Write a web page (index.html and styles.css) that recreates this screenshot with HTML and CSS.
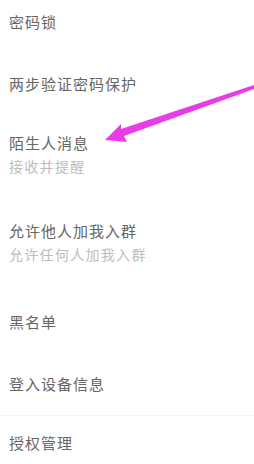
FILE: index.html
```html
<!DOCTYPE html>
<html lang="zh-CN">
<head>
    <meta charset="UTF-8">
    <meta name="viewport" content="width=device-width, initial-scale=1.0">
    <title>隐私设置</title>
    <link rel="stylesheet" href="styles.css">
</head>
<body>
    <div class="settings">
        <div class="row">
            <div class="title">密码锁</div>
        </div>
        <div class="row">
            <div class="title">两步验证密码保护</div>
        </div>
        <div class="row double">
            <div class="title">陌生人消息</div>
            <div class="sub">接收并提醒</div>
        </div>
        <div class="row double">
            <div class="title">允许他人加我入群</div>
            <div class="sub">允许任何人加我入群</div>
        </div>
        <div class="row">
            <div class="title">黑名单</div>
        </div>
        <div class="row line">
            <div class="title">登入设备信息</div>
        </div>
        <div class="row last">
            <div class="title">授权管理</div>
        </div>

        <!-- annotation arrow -->
        <svg class="arrow" width="254" height="160" viewBox="0 0 254 160">
            <polygon points="105,140 121,124 121,129 254,85 254,89 124,136 127,142" fill="#e83ce6"/>
        </svg>
    </div>
</body>
</html>
```

FILE: styles.css
```css
body {
    margin: 0;
    background: #fff;
    font-family: "Noto Sans CJK SC", "Noto Sans", sans-serif;
    overflow: hidden;
}
.settings {
    position: relative;
    margin-top: -9px;
}
.row {
    display: flex;
    flex-direction: column;
    padding: 21px 9px;
}
.row.double {
    padding: 18px 9px 28px;
}
.row.line {
    border-bottom: 1px solid #f3f3f3;
}
.row.last {
    padding-top: 17px;
}
.title {
    font-size: 15px;
    line-height: 20px;
    letter-spacing: 1px;
    color: #666;
}
.sub {
    margin-top: 4px;
    font-size: 14px;
    line-height: 18px;
    letter-spacing: 1.3px;
    color: #bdbdbd;
}
.arrow {
    position: absolute;
    left: 0;
    top: 9px;
}
```
